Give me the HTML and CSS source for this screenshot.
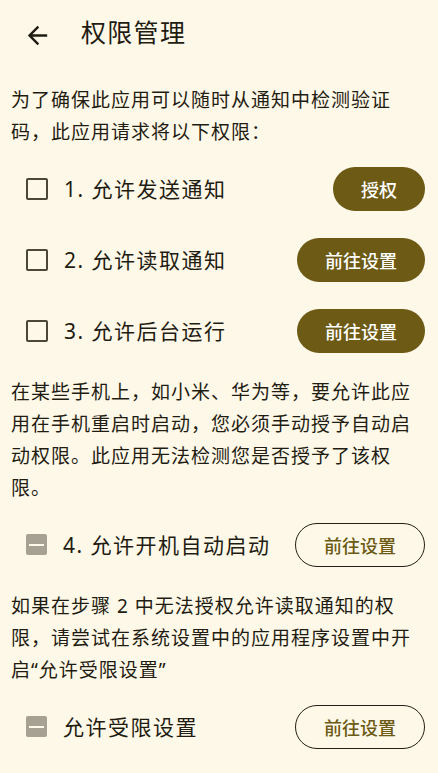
FILE: index.html
```html
<!DOCTYPE html>
<html lang="zh-CN">
<head>
<meta charset="utf-8">
<title>权限管理</title>
<link rel="stylesheet" href="styles.css">
</head>
<body>
<header class="topbar">
  <svg class="back" width="29" height="29" viewBox="0 0 24 24" aria-hidden="true">
    <path d="M20 11H7.83l5.59-5.59L12 4l-8 8 8 8 1.41-1.41L7.83 13H20v-2z" fill="#1f1c12"/>
  </svg>
  <h1 class="title">权限管理</h1>
</header>
<main class="content">
  <p class="para">为了确保此应用可以随时从通知中检测验证码，此应用请求将以下权限：</p>
  <div class="row first">
    <span class="box"></span>
    <span class="label">1. 允许发送通知</span>
    <button class="btn filled">授权</button>
  </div>
  <div class="row">
    <span class="box"></span>
    <span class="label">2. 允许读取通知</span>
    <button class="btn filled">前往设置</button>
  </div>
  <div class="row">
    <span class="box"></span>
    <span class="label">3. 允许后台运行</span>
    <button class="btn filled">前往设置</button>
  </div>
  <p class="para">在某些手机上，如小米、华为等，要允许此应用在手机重启时启动，您必须手动授予自动启动权限。此应用无法检测您是否授予了该权限。</p>
  <div class="row first">
    <span class="box indet"></span>
    <span class="label">4. 允许开机自动启动</span>
    <button class="btn outline">前往设置</button>
  </div>
  <p class="para">如果在步骤 2 中无法授权允许读取通知的权限，请尝试在系统设置中的应用程序设置中开启“允许受限设置”</p>
  <div class="row first">
    <span class="box indet"></span>
    <span class="label">允许受限设置</span>
    <button class="btn outline">前往设置</button>
  </div>
</main>
</body>
</html>
```
FILE: styles.css
```css
html, body {
  margin: 0;
  padding: 0;
}
body {
  background: #fef8e8;
  color: #1f1c12;
  font-family: "Noto Sans", "Noto Sans CJK SC", sans-serif;
  width: 438px;
  height: 773px;
  overflow: hidden;
}
.topbar {
  height: 70px;
  display: flex;
  align-items: center;
  padding-left: 23px;
  box-sizing: border-box;
}
.back {
  display: block;
}
.title {
  margin: 0 0 6px 29px;
  font-size: 25px;
  font-weight: 400;
  letter-spacing: 1.3px;
  line-height: 32px;
}
.content {
  padding: 0 13px 0 11px;
}
.para {
  margin: 14px 0 0 0;
  font-size: 19px;
  letter-spacing: 1px;
  line-height: 32px;
}
.para + .row {
  margin-top: 5px;
}
.row + .para {
  margin-top: 10px;
}
.row {
  height: 71px;
  display: flex;
  align-items: center;
}
.box {
  flex: none;
  width: 22px;
  height: 22px;
  box-sizing: border-box;
  border: 2px solid #4c4738;
  border-radius: 2px;
  margin-left: 15px;
  position: relative;
}
.box.indet {
  width: 21px;
  height: 21px;
  border: none;
  background: #a6a192;
}
.box.indet::after {
  content: "";
  position: absolute;
  left: 3px;
  right: 3px;
  top: 9.5px;
  height: 2px;
  background: #fef8e8;
}
.label {
  flex: 1;
  margin-left: 16px;
  font-size: 21px;
  letter-spacing: 1.5px;
  line-height: 28px;
}
.btn {
  flex: none;
  height: 44px;
  padding: 0 28px;
  border-radius: 22px;
  font-family: "Noto Sans CJK SC", "Noto Sans", sans-serif;
  font-size: 18px;
  font-weight: 500;
  line-height: 1;
  box-sizing: border-box;
  cursor: pointer;
}
.btn.filled {
  background: #6c5a15;
  color: #ffffff;
  border: none;
}
.btn.outline {
  background: transparent;
  color: #6c5a15;
  border: 1.5px solid #221f17;
}
```
